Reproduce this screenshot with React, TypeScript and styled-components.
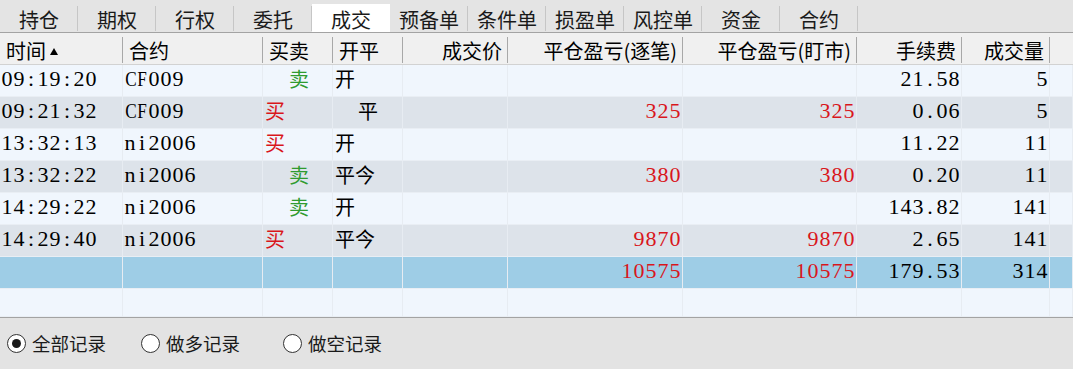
import React from 'react'
import styled, { createGlobalStyle } from 'styled-components'

const GlobalStyle = createGlobalStyle`
    html, body {
        margin: 0;
        padding: 0;
        background: #e3e3e3;
    }
    body {
        font-family: "Noto Sans CJK SC", "Noto Sans", sans-serif;
        color: #000;
    }
`

const CJK = `"Noto Sans CJK SC", "Noto Sans", sans-serif`
const COLS = '123px 140px 70px 70px 105px 175px 174px 105px 88px 1fr'

const Page = styled.div`
    display: flex;
    flex-direction: column;
    width: 1073px;
    height: 369px;
    overflow: hidden;
`

const TabBar = styled.div`
    display: flex;
    align-items: flex-end;
    height: 32px;
    background: #e4e4e4;
    border-bottom: 1px solid #a3a3a3;
`

const Tab = styled.div<{ $active?: boolean }>`
    position: relative;
    width: 78px;
    height: 28px;
    display: flex;
    align-items: center;
    justify-content: center;
    padding-top: 3px;
    box-sizing: border-box;
    font-family: ${CJK};
    font-size: 20px;
    line-height: 1;
    color: #1a1a1a;
    background: ${p => (p.$active ? '#ffffff' : 'transparent')};

    &::after {
        content: '';
        position: absolute;
        right: 0;
        top: 2px;
        bottom: 1px;
        width: 1px;
        background: ${p => (p.$active ? 'transparent' : '#c6c6c6')};
    }
`

const Table = styled.div`
    flex: 1;
    display: flex;
    flex-direction: column;
    background: #f0f6fd;
    border-bottom: 1px solid #a3a3a3;
`

const HeaderRow = styled.div`
    display: grid;
    grid-template-columns: ${COLS};
    height: 31px;
    background: #f0f0f0;
    border-bottom: 1px solid #d2d2d2;
`

const HeadCell = styled.div<{ $right?: boolean; $last?: boolean }>`
    position: relative;
    display: flex;
    align-items: center;
    justify-content: ${p => (p.$right ? 'flex-end' : 'flex-start')};
    gap: 4px;
    padding: 4px 6px 0 6px;
    font-family: ${CJK};
    font-size: 20px;
    line-height: 1;
    white-space: nowrap;

    &::after {
        content: '';
        position: absolute;
        right: 0;
        top: 4px;
        bottom: 1px;
        width: 1px;
        background: ${p => (p.$last ? 'transparent' : '#a8a8a8')};
    }
`

const Row = styled.div<{ $tone: 'light' | 'gray' | 'blue' }>`
    display: grid;
    grid-template-columns: ${COLS};
    height: 32px;
    background: ${p => (p.$tone === 'gray' ? '#dde3ea' : p.$tone === 'blue' ? '#9ecde6' : '#f0f6fd')};
`

const FillRow = styled(Row)`
    flex: 1;
    height: auto;
`

const Cell = styled.div<{ $right?: boolean; $indent?: number; $color?: string }>`
    display: flex;
    align-items: center;
    justify-content: ${p => (p.$right ? 'flex-end' : 'flex-start')};
    padding: 0 1px 3px ${p => 1 + (p.$indent || 0)}px;
    border-right: 1px solid #e7ecf2;
    border-bottom: 1px solid #e9eef4;
    font-family: ${CJK};
    font-size: 20px;
    line-height: 1;
    color: ${p => p.$color || '#000'};
    white-space: nowrap;
    overflow: hidden;
`

const Glyph = styled.span<{ $narrow?: boolean }>`
    display: inline-block;
    width: 12px;
    text-align: center;
    font-family: "Liberation Serif", "Times New Roman", serif;
    font-size: 22px;
    line-height: 1;
    transform: ${p => (p.$narrow ? 'scaleX(0.78)' : 'none')};
`

const SortMark = styled.svg`
    width: 8px;
    height: 7px;
    margin-top: 1px;
`

const Footer = styled.div`
    height: 51px;
    display: flex;
    align-items: center;
    padding-left: 7px;
    background: #e3e3e3;
`

const RadioItem = styled.label<{ $width: number }>`
    display: flex;
    align-items: center;
    gap: 6px;
    width: ${p => p.$width}px;
    font-family: ${CJK};
    font-size: 18.5px;
    line-height: 1;
    color: #1a1a1a;
`

const RadioDot = styled.span<{ $checked?: boolean }>`
    width: 19px;
    height: 19px;
    box-sizing: border-box;
    border-radius: 50%;
    border: 1px solid #333;
    background: #fff;
    display: flex;
    align-items: center;
    justify-content: center;

    &::before {
        content: '';
        width: 9px;
        height: 9px;
        border-radius: 50%;
        background: ${p => (p.$checked ? '#1a1a1a' : 'transparent')};
    }
`

const RED = '#d9161c'
const GREEN = '#2f9b2f'

const tabs = ['持仓', '期权', '行权', '委托', '成交', '预备单', '条件单', '损盈单', '风控单', '资金', '合约']

const heads: { label: string; right?: boolean }[] = [
    { label: '时间' },
    { label: '合约' },
    { label: '买卖' },
    { label: '开平' },
    { label: '成交价', right: true },
    { label: '平仓盈亏(逐笔)', right: true },
    { label: '平仓盈亏(盯市)', right: true },
    { label: '手续费', right: true },
    { label: '成交量', right: true },
]

interface Trade {
    time: string
    code: string
    buy: boolean
    oc: string
    price: string
    pnl1: string
    pnl2: string
    fee: string
    vol: string
}

const trades: Trade[] = [
    { time: '09:19:20', code: 'CF009', buy: false, oc: '开', price: '', pnl1: '', pnl2: '', fee: '21.58', vol: '5' },
    { time: '09:21:32', code: 'CF009', buy: true, oc: '平', price: '', pnl1: '325', pnl2: '325', fee: '0.06', vol: '5' },
    { time: '13:32:13', code: 'ni2006', buy: true, oc: '开', price: '', pnl1: '', pnl2: '', fee: '11.22', vol: '11' },
    { time: '13:32:22', code: 'ni2006', buy: false, oc: '平今', price: '', pnl1: '380', pnl2: '380', fee: '0.20', vol: '11' },
    { time: '14:29:22', code: 'ni2006', buy: false, oc: '开', price: '', pnl1: '', pnl2: '', fee: '143.82', vol: '141' },
    { time: '14:29:40', code: 'ni2006', buy: true, oc: '平今', price: '', pnl1: '9870', pnl2: '9870', fee: '2.65', vol: '141' },
]

// half-width characters sit in fixed 12px cells, like the terminal's font
const Mono = ({ text }: { text: string }) => (
    <>
        {text.split('').map((c, i) => (
            <Glyph key={i} $narrow={/[A-Z]/.test(c)}>{c}</Glyph>
        ))}
    </>
)

const Empty = () => (
    <>
        {Array.from({ length: 10 }).map((_, i) => (
            <Cell key={i} />
        ))}
    </>
)

export default function App() {
    return (
        <Page>
            <GlobalStyle />
            <TabBar>
                {tabs.map(t => (
                    <Tab key={t} $active={t === '成交'}>{t}</Tab>
                ))}
            </TabBar>
            <Table>
                <HeaderRow>
                    {heads.map((h, i) => (
                        <HeadCell key={h.label} $right={h.right}>
                            {h.label}
                            {i === 0 && (
                                <SortMark viewBox="0 0 8 7">
                                    <path d="M4 0 L8 7 L0 7 Z" fill="#000" />
                                </SortMark>
                            )}
                        </HeadCell>
                    ))}
                    <HeadCell $last />
                </HeaderRow>
                {trades.map((t, i) => (
                    <Row key={t.time} $tone={i % 2 ? 'gray' : 'light'}>
                        <Cell><Mono text={t.time} /></Cell>
                        <Cell><Mono text={t.code} /></Cell>
                        <Cell $indent={t.buy ? 1 : 25} $color={t.buy ? RED : GREEN}>{t.buy ? '买' : '卖'}</Cell>
                        <Cell $indent={t.oc === '平' ? 24 : 1}>{t.oc}</Cell>
                        <Cell $right><Mono text={t.price} /></Cell>
                        <Cell $right $color={RED}><Mono text={t.pnl1} /></Cell>
                        <Cell $right $color={RED}><Mono text={t.pnl2} /></Cell>
                        <Cell $right><Mono text={t.fee} /></Cell>
                        <Cell $right><Mono text={t.vol} /></Cell>
                        <Cell />
                    </Row>
                ))}
                <Row $tone="blue">
                    <Cell />
                    <Cell />
                    <Cell />
                    <Cell />
                    <Cell />
                    <Cell $right $color={RED}><Mono text="10575" /></Cell>
                    <Cell $right $color={RED}><Mono text="10575" /></Cell>
                    <Cell $right><Mono text="179.53" /></Cell>
                    <Cell $right><Mono text="314" /></Cell>
                    <Cell />
                </Row>
                <FillRow $tone="light">
                    <Empty />
                </FillRow>
            </Table>
            <Footer>
                <RadioItem $width={134}><RadioDot $checked />全部记录</RadioItem>
                <RadioItem $width={142}><RadioDot />做多记录</RadioItem>
                <RadioItem $width={142}><RadioDot />做空记录</RadioItem>
            </Footer>
        </Page>
    )
}
